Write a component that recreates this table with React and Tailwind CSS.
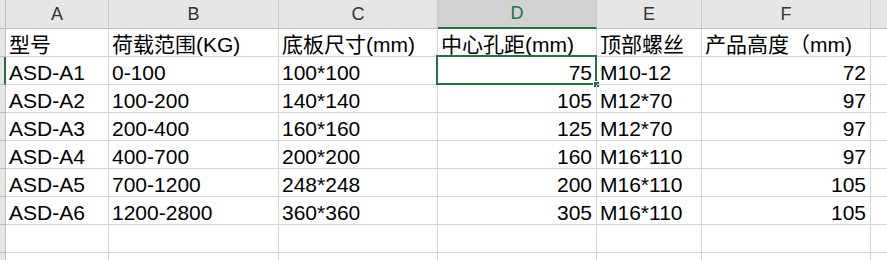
const cols = ['A', 'B', 'C', 'D', 'E', 'F'];

const rows = [
  ['型号', '荷载范围(KG)', '底板尺寸(mm)', '中心孔距(mm)', '顶部螺丝', '产品高度（mm)'],
  ['ASD-A1', '0-100', '100*100', 75, 'M10-12', 72],
  ['ASD-A2', '100-200', '140*140', 105, 'M12*70', 97],
  ['ASD-A3', '200-400', '160*160', 125, 'M12*70', 97],
  ['ASD-A4', '400-700', '200*200', 160, 'M16*110', 97],
  ['ASD-A5', '700-1200', '248*248', 200, 'M16*110', 105],
  ['ASD-A6', '1200-2800', '360*360', 305, 'M16*110', 105],
  ['', '', '', '', '', ''],
  ['', '', '', '', '', ''],
];

function Cell({ value, selected }) {
  const isNum = typeof value === 'number';
  return (
    <div
      className={`relative h-[28px] border-r border-b border-[#d4d4d4] flex items-end overflow-visible whitespace-nowrap ${
        isNum ? 'justify-end pr-[4px]' : 'justify-start pl-[3px]'
      }`}
    >
      <span className="leading-[21px] pb-[1px]">{value}</span>
      {selected && (
        <div className="absolute left-[-2px] top-[-2px] right-[-1px] bottom-[-1px] border-2 border-[#217346] pointer-events-none">
          <div className="absolute right-[-5px] bottom-[-5px] w-[7px] h-[7px] bg-[#217346] border border-white" />
        </div>
      )}
    </div>
  );
}

export default function App() {
  return (
    <div
      className="w-[887px] h-[260px] overflow-hidden bg-white text-black text-[21px]"
      style={{ fontFamily: '"Liberation Sans", "Noto Sans CJK SC", sans-serif' }}
    >
      <div className="grid grid-cols-[6px_103px_170px_159px_159px_105px_169px_1fr]">
        {/* column header row */}
        <div className="h-[29px] bg-[#e6e6e6] border-r border-b border-[#bdbdbd]" />
        {cols.map((c) => (
          <div
            key={c}
            className={`h-[29px] flex items-center justify-center text-[18px] border-r border-[#c8c8c8] ${
              c === 'D'
                ? 'bg-[#d2d2d2] text-[#217346] border-b-2 border-b-[#217346]'
                : 'bg-[#e6e6e6] text-[#333] border-b border-b-[#bdbdbd]'
            }`}
          >
            {c}
          </div>
        ))}
        <div className="h-[29px] bg-[#e6e6e6] border-b border-[#bdbdbd]" />

        {rows.map((r, i) => (
          <div key={i} className="contents">
            <div
              className={`h-[28px] bg-[#e6e6e6] border-b border-[#bdbdbd] ${
                i === 1 ? 'border-r-2 border-r-[#217346]' : 'border-r border-r-[#bdbdbd]'
              }`}
            />
            {r.map((v, j) => (
              <Cell key={j} value={v} selected={i === 1 && j === 3} />
            ))}
            <div className="h-[28px] border-b border-[#d4d4d4]" />
          </div>
        ))}
      </div>
    </div>
  );
}
